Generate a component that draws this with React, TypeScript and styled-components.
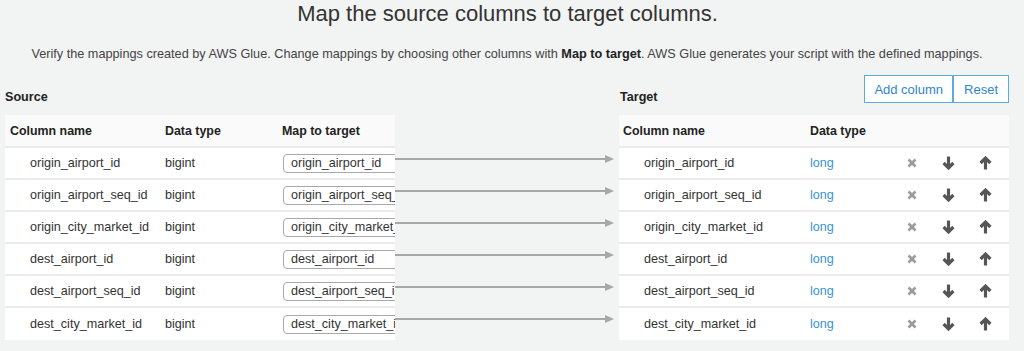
import React from "react";
import styled, { createGlobalStyle } from "styled-components";

const Global = createGlobalStyle`
  html, body { margin: 0; padding: 0; }
  body {
    background: #f2f3f3;
    font-family: "Liberation Sans", Arial, Helvetica, sans-serif;
    color: #333;
    font-size: 12.6px;
  }
`;

const Page = styled.div`
  width: 1024px;
  height: 351px;
  overflow: hidden;
`;

const Title = styled.h1`
  margin: 0;
  padding-top: 1px;
  padding-right: 9px;
  font-size: 22px;
  line-height: 26px;
  font-weight: normal;
  text-align: center;
  color: #333;
`;

const Subtitle = styled.p`
  margin: 19px 0 0;
  font-size: 12.7px;
  line-height: 16px;
  text-align: center;
  padding-right: 10px;
  color: #444;
  b { color: #222; }
`;

const Main = styled.div`
  display: flex;
  margin-top: 13px;
  padding-left: 5px;
`;

const Section = styled.div`
  width: 390px;
  display: flex;
  flex-direction: column;
`;

const SectionHead = styled.div`
  height: 29px;
  display: flex;
  align-items: flex-end;
  justify-content: space-between;
  margin-bottom: 11px;
`;

const Label = styled.div<{ $indent?: number }>`
  font-weight: bold;
  font-size: 12.6px;
  line-height: 16px;
  color: #222;
  padding-left: ${(p) => p.$indent ?? 0}px;
  margin-bottom: -1px;
`;

const ButtonGroup = styled.div`
  display: flex;
  align-self: flex-start;
`;

const Button = styled.button<{ $first?: boolean }>`
  height: 28px;
  padding: 0 ${(p) => (p.$first ? 9 : 10)}px;
  background: #fff;
  border: 1px solid #5aaae3;
  ${(p) => (p.$first ? "border-right: 2px solid #5aaae3;" : "border-left: none;")}
  color: #2d87c9;
  font-family: "Liberation Sans", Arial, sans-serif;
  font-size: 13px;
  cursor: pointer;
`;

const Panel = styled.div`
  background: #fff;
  overflow: hidden;
`;

const Row = styled.div<{ $cols: string; $header?: boolean }>`
  display: grid;
  grid-template-columns: ${(p) => p.$cols};
  align-items: center;
  height: ${(p) => (p.$header ? 31 : 30)}px;
  background: ${(p) => (p.$header ? "#fafafa" : "#fff")};
  border-bottom: 2px solid #ebebeb;
  &:last-child { border-bottom: none; height: 32px; }
  font-weight: ${(p) => (p.$header ? "bold" : "normal")};
  font-size: ${(p) => (p.$header ? 12.4 : 12.6)}px;
  color: ${(p) => (p.$header ? "#222" : "#333")};
  white-space: nowrap;
`;

const Cell = styled.div<{ $pad?: number; $center?: boolean }>`
  padding-left: ${(p) => p.$pad ?? 0}px;
  min-width: 0;
  overflow: hidden;
  display: flex;
  align-items: center;
  justify-content: ${(p) => (p.$center ? "center" : "flex-start")};
`;

const Select = styled.div`
  box-sizing: border-box;
  width: 140px;
  flex-shrink: 0;
  height: 19px;
  line-height: 17px;
  border: 1px solid #a9a9a9;
  border-radius: 4px;
  padding-left: 7px;
  background: #fff;
  color: #333;
  overflow: hidden;
`;

const TypeLink = styled.span`
  color: #3a93d5;
`;

const IconBtn = styled.span`
  display: inline-flex;
`;

const Middle = styled.div`
  width: 224px;
  padding-top: 73px;
  display: flex;
  flex-direction: column;
`;

const ArrowRow = styled.div`
  height: 32px;
  display: flex;
  align-items: flex-start;
  padding-top: 10px;
  box-sizing: border-box;
`;

const ArrowLine = styled.div`
  position: relative;
  width: 211px;
  height: 2px;
  background: #a8a8a8;
  &::after {
    content: "";
    position: absolute;
    right: -8px;
    top: -3px;
    border-left: 9px solid #a8a8a8;
    border-top: 4px solid transparent;
    border-bottom: 4px solid transparent;
  }
`;

const CrossIcon = () => (
  <svg width="10" height="10" viewBox="0 0 10 10">
    <path d="M1.5 1.5 L8.5 8.5 M8.5 1.5 L1.5 8.5" stroke="#9a9a9a" strokeWidth="2.6" strokeLinecap="butt" />
  </svg>
);

const DownIcon = () => (
  <svg width="13" height="14" viewBox="0 0 13 14">
    <path d="M6.5 0.5 V11" stroke="#555" strokeWidth="3.2" />
    <path d="M1.6 7 L6.5 11.9 L11.4 7" stroke="#555" strokeWidth="3.2" fill="none" strokeLinejoin="miter" />
  </svg>
);

const UpIcon = () => (
  <svg width="13" height="14" viewBox="0 0 13 14">
    <path d="M6.5 13.5 V3" stroke="#555" strokeWidth="3.2" />
    <path d="M1.6 7 L6.5 2.1 L11.4 7" stroke="#555" strokeWidth="3.2" fill="none" strokeLinejoin="miter" />
  </svg>
);

const rows = [
  "origin_airport_id",
  "origin_airport_seq_id",
  "origin_city_market_id",
  "dest_airport_id",
  "dest_airport_seq_id",
  "dest_city_market_id",
];

const srcCols = "160px 117px 1fr";
const tgtCols = "191px 83px 37px 37px 37px 1fr";

export default function App() {
  return (
    <Page>
      <Global />
      <Title>Map the source columns to target columns.</Title>
      <Subtitle>
        Verify the mappings created by AWS Glue. Change mappings by choosing other columns with{" "}
        <b>Map to target</b>. AWS Glue generates your script with the defined mappings.
      </Subtitle>
      <Main>
        <Section>
          <SectionHead>
            <Label>Source</Label>
          </SectionHead>
          <Panel>
            <Row $cols={srcCols} $header>
              <Cell $pad={5}>Column name</Cell>
              <Cell>Data type</Cell>
              <Cell>Map to target</Cell>
            </Row>
            {rows.map((r) => (
              <Row key={r} $cols={srcCols}>
                <Cell $pad={25}>{r}</Cell>
                <Cell>bigint</Cell>
                <Cell $pad={1}>
                  <Select>{r}</Select>
                </Cell>
              </Row>
            ))}
          </Panel>
        </Section>
        <Middle>
          {rows.map((r) => (
            <ArrowRow key={r}>
              <ArrowLine />
            </ArrowRow>
          ))}
        </Middle>
        <Section>
          <SectionHead>
            <Label $indent={1}>Target</Label>
            <ButtonGroup>
              <Button $first>Add column</Button>
              <Button>Reset</Button>
            </ButtonGroup>
          </SectionHead>
          <Panel>
            <Row $cols={tgtCols} $header>
              <Cell $pad={4}>Column name</Cell>
              <Cell>Data type</Cell>
              <Cell />
              <Cell />
              <Cell />
            </Row>
            {rows.map((r) => (
              <Row key={r} $cols={tgtCols}>
                <Cell $pad={25}>{r}</Cell>
                <Cell>
                  <TypeLink>long</TypeLink>
                </Cell>
                <Cell $center>
                  <IconBtn>
                    <CrossIcon />
                  </IconBtn>
                </Cell>
                <Cell $center>
                  <IconBtn>
                    <DownIcon />
                  </IconBtn>
                </Cell>
                <Cell $center>
                  <IconBtn>
                    <UpIcon />
                  </IconBtn>
                </Cell>
              </Row>
            ))}
          </Panel>
        </Section>
      </Main>
    </Page>
  );
}
